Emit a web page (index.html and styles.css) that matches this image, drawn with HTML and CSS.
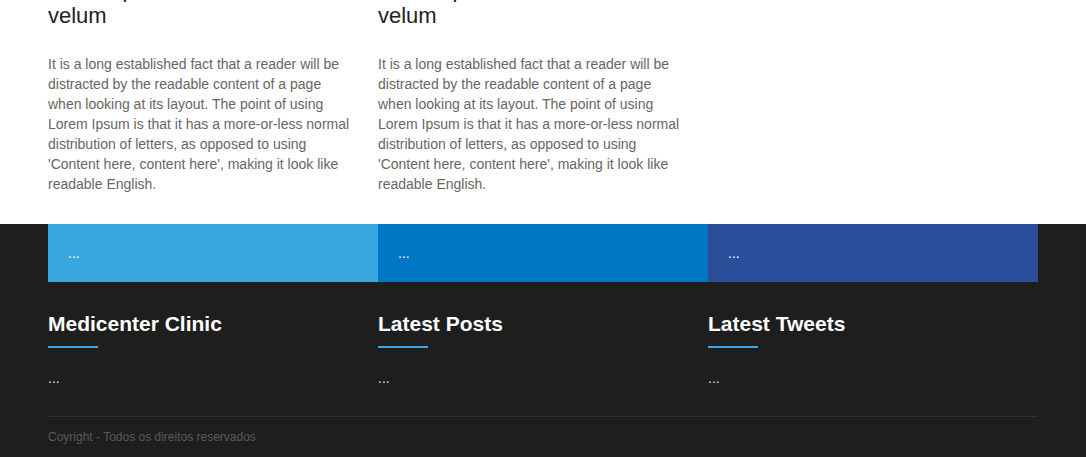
FILE: index.html
```html
<!DOCTYPE html>
<html lang="pt">
<head>
<meta charset="utf-8">
<title>Medicenter Clinic</title>
<link rel="stylesheet" href="styles.css">
</head>
<body>
<section class="content">
  <div class="container cols">
    <article class="col">
      <h2 class="post-title">Nullam pulvinar<br>velum</h2>
      <p class="post-text">It is a long established fact that a reader will be distracted by the readable content of a page when looking at its layout. The point of using Lorem Ipsum is that it has a more-or-less normal distribution of letters, as opposed to using 'Content here, content here', making it look like readable English.</p>
    </article>
    <article class="col">
      <h2 class="post-title">Nullam pulvinar<br>velum</h2>
      <p class="post-text">It is a long established fact that a reader will be distracted by the readable content of a page when looking at its layout. The point of using Lorem Ipsum is that it has a more-or-less normal distribution of letters, as opposed to using 'Content here, content here', making it look like readable English.</p>
    </article>
    <article class="col"></article>
  </div>
</section>
<footer class="footer">
  <div class="container">
    <div class="boxes">
      <div class="box box-light">...</div>
      <div class="box box-mid">...</div>
      <div class="box box-dark">...</div>
    </div>
    <div class="cols footer-cols">
      <div class="col">
        <h3 class="footer-title">Medicenter Clinic</h3>
        <div class="footer-text">...</div>
      </div>
      <div class="col">
        <h3 class="footer-title">Latest Posts</h3>
        <div class="footer-text">...</div>
      </div>
      <div class="col">
        <h3 class="footer-title">Latest Tweets</h3>
        <div class="footer-text">...</div>
      </div>
    </div>
    <div class="copyright">Coyright - Todos os direitos reservados</div>
  </div>
</footer>
</body>
</html>
```
FILE: styles.css
```css
* { box-sizing: border-box; }
html, body { margin: 0; padding: 0; }
body {
  font-family: "Liberation Sans", Arial, sans-serif;
  background: #1e1e1e;
}
.container {
  width: 990px;
  margin: 0 auto;
}
.cols {
  display: flex;
}
.col {
  width: 330px;
  flex: 0 0 330px;
}
.content {
  background: #fff;
  margin-top: -23px;
  padding-bottom: 30px;
}
.post-title {
  margin: 0 0 25px;
  font-size: 22px;
  line-height: 26px;
  font-weight: normal;
  color: #222;
}
.post-text {
  margin: 0;
  padding-right: 24px;
  font-size: 14px;
  line-height: 20px;
  color: #666;
}
.boxes {
  display: flex;
}
.box {
  width: 330px;
  height: 58px;
  padding: 20px 20px 0;
  font-size: 14px;
  line-height: 18px;
  color: #fff;
}
.box-light { background: #3aa8e0; }
.box-mid { background: #0077c4; }
.box-dark { background: #2b4e9a; }
.footer-cols {
  padding-top: 30px;
  padding-bottom: 28px;
  border-bottom: 1px solid #313131;
}
.footer-title {
  margin: 0;
  font-size: 21px;
  line-height: 24px;
  font-weight: bold;
  color: #fff;
}
.footer-title::after {
  content: "";
  display: block;
  width: 50px;
  height: 2px;
  margin-top: 10px;
  background: #3aa8e0;
}
.footer-text {
  margin-top: 20px;
  font-size: 14px;
  line-height: 20px;
  color: #ddd;
}
.copyright {
  padding: 12px 0 20px;
  font-size: 12px;
  line-height: 16px;
  color: #5a5a5a;
}
```
